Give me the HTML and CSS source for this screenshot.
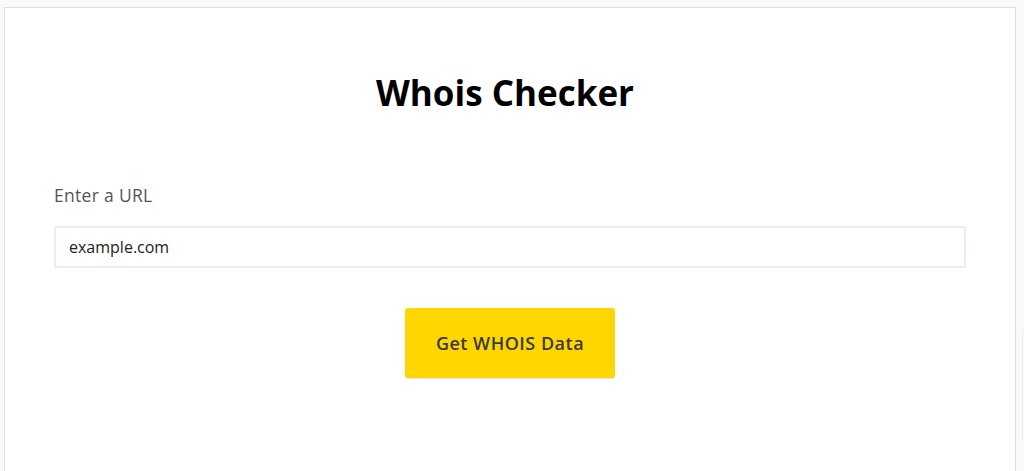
FILE: index.html
```html
<!DOCTYPE html>
<html lang="en">
<head>
<meta charset="utf-8">
<title>Whois Checker</title>
<link rel="stylesheet" href="styles.css">
</head>
<body>
<main class="card">
  <h1 class="title">Whois Checker</h1>
  <form class="form">
    <label class="label" for="url">Enter a URL</label>
    <input class="input" id="url" type="text" value="example.com">
    <div class="actions">
      <button class="btn" type="button">Get WHOIS Data</button>
    </div>
  </form>
</main>
<div class="edge"></div>
</body>
</html>
```

FILE: styles.css
```css
html, body {
  margin: 0;
  height: 100%;
}
body {
  background: #f9f9fb;
  font-family: "Open Sans", "Noto Sans", sans-serif;
  padding: 7px 8px 0 4px;
  box-sizing: border-box;
  overflow: hidden;
  position: relative;
}
.card {
  background: #fff;
  border: 1px solid #dedede;
  border-bottom: none;
  min-height: 500px;
  padding: 0 49px;
  box-sizing: border-box;
}
.title {
  margin: 0;
  padding: 62px 10px 0 0;
  text-align: center;
  font-size: 35px;
  font-weight: 700;
  color: #000;
  line-height: 46px;
  letter-spacing: 0;
}
.form {
  display: flex;
  flex-direction: column;
  padding-top: 67px;
}
.label {
  font-size: 17.5px;
  color: #555;
  line-height: 24px;
  letter-spacing: 0.3px;
  margin-bottom: 19px;
}
.input {
  height: 42px;
  box-sizing: border-box;
  border: 2px solid #ebebf6;
  border-radius: 2px;
  padding: 0 13px;
  font-family: inherit;
  font-size: 16px;
  color: #222;
  outline: none;
}
.actions {
  display: flex;
  justify-content: center;
  padding-top: 40px;
}
.btn {
  width: 210px;
  height: 70px;
  background: #ffd600;
  border: none;
  border-radius: 3px;
  box-shadow: 0 1px 1px rgba(0,0,0,0.12);
  font-family: inherit;
  font-size: 18px;
  font-weight: 600;
  letter-spacing: 0.5px;
  color: #3a3a3a;
  cursor: pointer;
}
.edge {
  position: absolute;
  right: 1px;
  top: 330px;
  width: 1px;
  height: 110px;
  background: #ececec;
}
```
